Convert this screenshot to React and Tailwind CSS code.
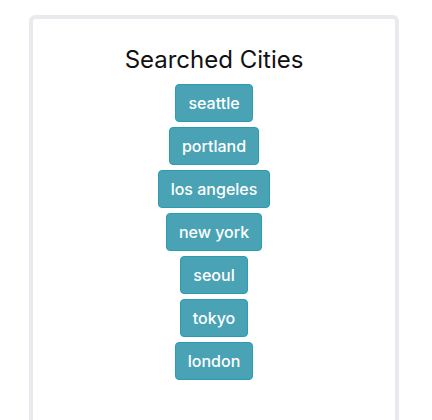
const cities = ["seattle", "portland", "los angeles", "new york", "seoul", "tokyo", "london"];

export default function App() {
  return (
    <div className="min-h-[420px] bg-white pl-[29px] pr-[33px] pt-[15px] font-['Inter','Liberation_Sans',sans-serif]">
      <div className="h-[420px] rounded-[6px] border-4 border-b-0 border-[#e9eaee] pt-[26px]">
        <h2 className="mb-[10px] text-center text-[24px] leading-[29px] font-normal text-[#111]">Searched Cities</h2>
        <div className="flex flex-col items-center gap-[5px]">
          {cities.map((city) => (
            <button
              key={city}
              className="h-[38px] rounded-[4px] border border-[#2b9db1] bg-[#4aa3b5] px-3 text-[16px] leading-6 font-medium text-white"
            >
              {city}
            </button>
          ))}
        </div>
      </div>
    </div>
  );
}
